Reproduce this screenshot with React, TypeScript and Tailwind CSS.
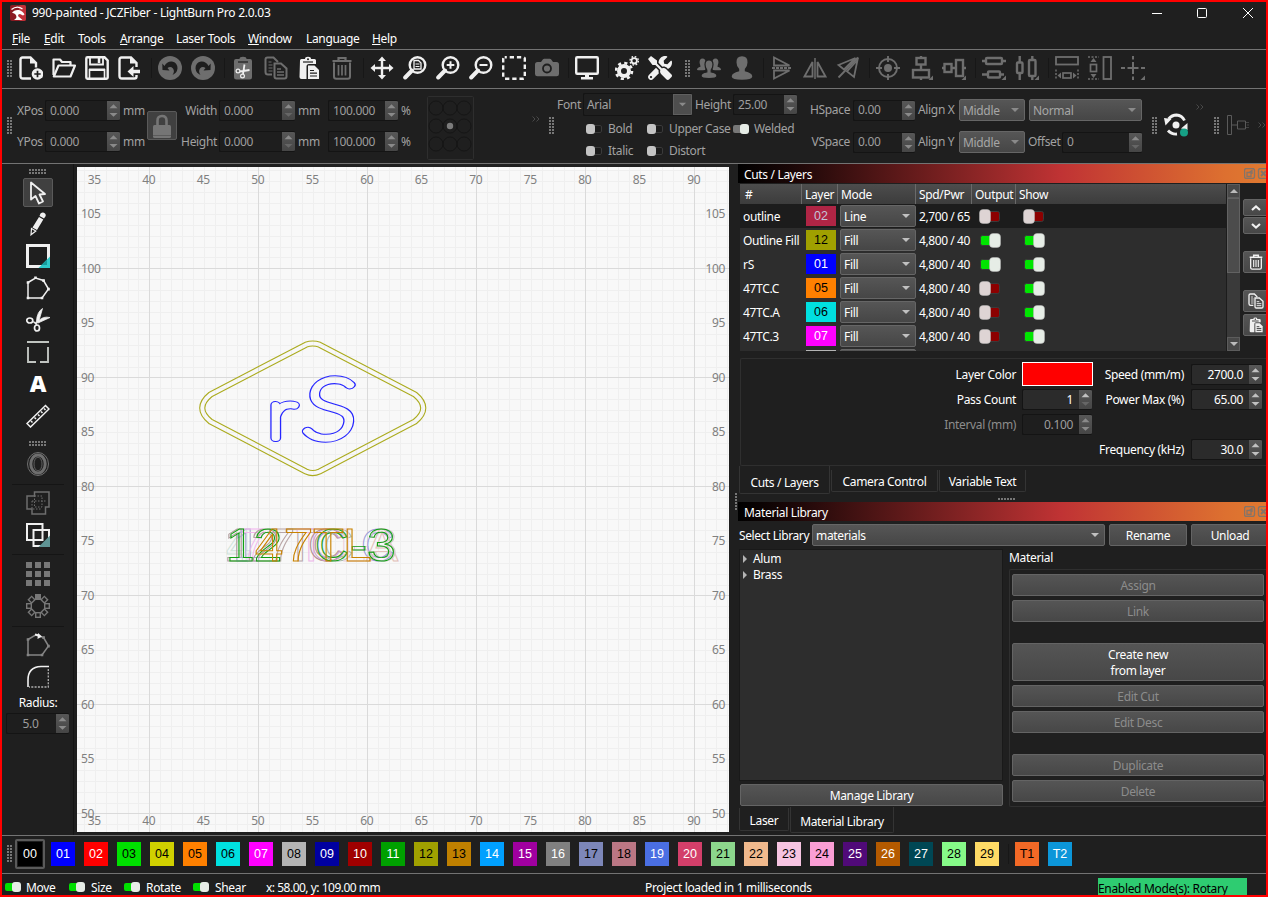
import React from "react";
import { FaTools } from "react-icons/fa";

type P = { className?: string; children?: React.ReactNode };

const W = "#f0f0f0";
const G = "#6e6e6e";

function Svg({ children, className = "" }: P) {
  return (
    <svg viewBox="0 0 24 24" className={"h-6 w-6 shrink-0 " + className} fill="none">
      {children}
    </svg>
  );
}

function HandleV({ className = "" }: P) {
  return (
    <svg viewBox="0 0 5 18" className={"h-[18px] w-[5px] shrink-0 " + className} fill="#777">
      {[0, 3, 6, 9, 12, 15].map((y) => (
        <g key={y}>
          <rect x="0" y={y} width="2" height="2" />
          <rect x="3" y={y} width="2" height="2" />
        </g>
      ))}
    </svg>
  );
}

function HandleH({ className = "", rows = 2 }: P & { rows?: number }) {
  return (
    <svg viewBox="0 0 18 5" className={"h-[5px] w-[18px] shrink-0 " + className} fill="#777">
      {[0, 3, 6, 9, 12, 15].map((x) => (
        <g key={x}>
          <rect x={x} y="0" width="2" height="2" />
          {rows > 1 && <rect x={x} y="3" width="2" height="2" />}
        </g>
      ))}
    </svg>
  );
}

function Spin({ v, className = "", align = "left", on = false, up = true, down = true }: P & { v: string; align?: string; on?: boolean; up?: boolean; down?: boolean }) {
  const hi = on ? "#c0c0c0" : "#8a8a8a";
  return (
    <div className={"flex shrink-0 overflow-hidden rounded-[2px] border border-r-0 border-[#141414] " + (on ? "bg-[#2b2b2b] text-white " : "bg-[#1e1e1e] text-[#9d9d9d] ") + className}>
      <span className={"flex flex-1 items-center " + (align === "right" ? "justify-end pr-[6px]" : align === "center" ? "justify-center pr-[2px]" : "pl-[4px]")}>{v}</span>
      <svg viewBox="0 0 13 20" preserveAspectRatio="none" className="h-full w-[13px] shrink-0 bg-linear-to-b from-[#575757] to-[#464646]">
        <path d="M2.5 7.5L6.5 3.5L10.5 7.5Z" fill={up ? hi : "#666"} />
        <path d="M2.5 12.5L6.5 16.5L10.5 12.5Z" fill={down ? hi : "#666"} />
      </svg>
    </div>
  );
}

function Select({ v, className = "", on = false }: P & { v: string; on?: boolean }) {
  return (
    <div className={"flex shrink-0 items-center justify-between rounded-[2px] border border-[#666] bg-linear-to-b from-[#565656] to-[#464646] pr-[5px] pl-[3px] " + (on ? "text-white " : "text-[#a6a6a6] ") + className}>
      <span className="pt-px">{v}</span>
      <svg viewBox="0 0 8 4" className="h-1 w-2">
        <path d="M0 0H8L4 4Z" fill={on ? "#c0c0c0" : "#8a8a8a"} />
      </svg>
    </div>
  );
}

function Btn({ children, className = "" }: P) {
  return (
    <div className={"flex shrink-0 items-center justify-center rounded-[2px] border border-[#646464] bg-linear-to-b from-[#555] to-[#474747] text-center " + className}>{children}</div>
  );
}

function SmallToggle({ kind }: { kind: "off" | "grayon" | "green" }) {
  return (
    <svg viewBox="0 0 16 11" className="h-[11px] w-4 shrink-0">
      {kind === "off" && <rect x="6.5" y="1.5" width="9" height="7" rx="1.5" fill="#1b1b1b" stroke="#3a3a3a" />}
      {kind === "grayon" && <rect x="0" y="1" width="10" height="8" rx="2" fill="#777" />}
      {kind === "green" && <rect x="0" y="1" width="10" height="8" rx="2" fill="#00e000" />}
      <rect x={kind === "off" ? 0 : 7} y="0" width="9" height="10" rx="3" fill={kind === "off" ? "#c4c4c4" : "#e6ece6"} />
    </svg>
  );
}

function Toggle({ on }: { on: boolean }) {
  return (
    <svg viewBox="0 0 22 15" className="h-[15px] w-[22px] shrink-0">
      <rect x={on ? 1.5 : 8.5} y="2.5" width="12" height="10" rx="2" fill={on ? "#00e600" : "#8c0000"} stroke="#3a3a3a" />
      <rect x={on ? 10.5 : 0.5} y="0.5" width="11" height="14" rx="3.5" fill={on ? "#e6ede6" : "#ded4d4"} stroke="#bbb" strokeWidth=".5" />
    </svg>
  );
}

const More = ({ className = "" }: P) => (
  <svg viewBox="0 0 8 6" className={"h-[6px] w-2 shrink-0 " + className} fill="none" stroke="#484848" strokeWidth="1">
    <path d="M.5 .5L3 3L.5 5.5M4.5 .5L7 3L4.5 5.5" />
  </svg>
);

const Sep = () => <div className="h-5 w-[7px] shrink-0 border-l border-[#171717]" />;

const Clip = ({ c }: { c: string }) => (
  <>
    <path d="M3 4.5Q3 3 4.5 3H8Q8 .8 11 .8T14 3h3.5Q19 3 19 4.5V8h-7Q9.500 8 9.500 10.500V23H4.500Q2.500 23 2.500 21Z" fill={c} />
    <path d="M6 6h10" stroke="#1e1e1e" strokeWidth="1.2" />
    <circle cx="11" cy="3.200" r="1" fill="#1e1e1e" />
    <path d="M11 9.500h6.500L22 14v9H11Z" fill={c} />
    <path d="M13 14.500h4M13 17.200h7M13 20h7" stroke="#1e1e1e" strokeWidth="1.200" />
  </>
);
const CopyG = ({ c }: { c: string }) => (
  <>
    <path d="M8 18.500H4Q1.500 18.500 1.500 16V3.500Q1.500 1.500 3.500 1.500H9.500L14 6" stroke={c} strokeWidth="2" />
    <path d="M4.500 6h3M4.500 9h4M4.500 12h4M4.500 15h4" stroke={c} strokeWidth="1.200" />
    <path d="M10.500 7.500H17L22.500 12.500V20.500Q22.500 22.500 20.500 22.500H12.500Q10.500 22.500 10.500 20.500Z" stroke={c} strokeWidth="2" />
    <path d="M13 13h4M13 16h7M13 19h7" stroke={c} strokeWidth="1.400" />
  </>
);
const TrashG = ({ c }: { c: string }) => (
  <>
    <path d="M2.500 5h19M8.500 4.500V2h7v2.500" stroke={c} strokeWidth="2.200" />
    <path d="M4 6.500V20.500Q4 22.700 6.200 22.700H17.800Q20 22.700 20 20.500V6.500" stroke={c} strokeWidth="2" />
    <path d="M8.500 9v10.500M12 9v10.500M15.500 9v10.500" stroke={c} strokeWidth="1.700" />
  </>
);
const Lens = ({ children }: P) => (
  <Svg>
    <circle cx="14.500" cy="9" r="7.800" stroke={W} strokeWidth="2.400" />
    <path d="M9 14.500L2.200 21.500" stroke={W} strokeWidth="4" strokeLinecap="round" />
    {children}
  </Svg>
);
const Undo = ({ className = "" }: P) => (
  <Svg className={className}>
    <circle cx="12" cy="12" r="12" fill={G} />
    <path d="M6.500 10Q9 5 14 5.500Q19.500 6.500 19.500 12.500Q19 17 14.500 19Q17 15.500 15 12.500Q12.500 10 9.500 12L11.500 14.500L4.500 14L4.300 7.500Z" fill="#1e1e1e" />
  </Svg>
);

function MainToolbar() {
  const tri = <path d="M24 19.500V24H19.500Z" fill={G} />;
  return (
    <div className="flex h-[39px] shrink-0 items-center border-b border-[#737373] pb-[2px] pl-[7px]">
      <HandleV className="mt-px" />
      <div className="ml-[7px] flex items-center gap-[9px]">
        <Svg>
          <path d="M12 22.500H4Q1.500 22.500 1.500 20V3.500Q1.500 1.500 3.500 1.500H11.500L17 7V11.500" stroke={W} strokeWidth="2.400" />
          <path d="M11 1v6.500h6.500" fill={W} />
          <circle cx="18.500" cy="18" r="5.800" fill={W} />
          <path d="M18.500 14.800v6.400M15.300 18h6.400" stroke="#1e1e1e" strokeWidth="1.700" />
        </Svg>
        <Svg>
          <path d="M1.500 19V3.500H8L10 6H18.500V9" stroke={W} strokeWidth="2.200" strokeLinejoin="round" />
          <path d="M1.800 20.500L6.500 9.500H23L18.500 20.500Z" stroke={W} strokeWidth="2.200" strokeLinejoin="round" />
        </Svg>
        <Svg>
          <path d="M1.300 2.500Q1.300 1.300 2.500 1.300H19.500L22.700 4.500V21.500Q22.700 22.700 21.500 22.700H2.500Q1.300 22.700 1.300 21.500Z" stroke={W} strokeWidth="2.400" />
          <path d="M5 1.500V8.500H18V1.500" stroke={W} strokeWidth="1.800" />
          <path d="M14 2v5" stroke={W} strokeWidth="2.500" />
          <path d="M4 12.500H20V15H4Z" fill={W} />
          <path d="M4.500 13V22.500M19.500 13V22.500" stroke={W} strokeWidth="1.600" />
        </Svg>
        <Svg>
          <path d="M18.500 19V20.500Q18.500 22.500 16.500 22.500H4Q1.500 22.500 1.500 20V3.500Q1.500 1.500 3.500 1.500H13L18.500 7V11" stroke={W} strokeWidth="2.400" />
          <path d="M12 1v6.500h6.500" fill={W} />
          <path d="M9.500 15.500L15.500 10V13.700H22V17.300H15.500V21Z" fill={W} />
        </Svg>
      </div>
      <div className="w-[9px]" /><Sep />
      <div className="flex gap-[9px]">
        <Undo /><Undo className="-scale-x-100" />
      </div>
      <div className="w-[9px]" /><Sep />
      <div className="flex gap-[9px]">
        <Svg>
          <path d="M3 5Q3 3 5 3H8.500Q8.500 .8 12 .8T15.500 3H19Q21 3 21 5V21Q21 23.500 18.500 23.500H5.500Q3 23.500 3 21Z" fill={G} />
          <path d="M7 6h10" stroke="#1e1e1e" strokeWidth="1.200" />
          <circle cx="7" cy="15" r="1.900" stroke={W} strokeWidth="1.200" />
          <circle cx="11.500" cy="20" r="1.900" stroke={W} strokeWidth="1.200" />
          <path d="M9 15.500L18.500 14M12 18L13.500 8.500" stroke={W} strokeWidth="1.800" />
        </Svg>
        <Svg><CopyG c={G} /></Svg>
        <Svg><Clip c={W} /></Svg>
        <Svg><TrashG c={G} /></Svg>
      </div>
      <div className="w-[9px]" /><Sep />
      <div className="flex gap-[9px]">
        <Svg>
          <path d="M12 3v18M3 12h18" stroke={W} strokeWidth="2.400" />
          <path d="M12 .5L16 5H8ZM12 23.500L16 19H8ZM.5 12L5 8V16ZM23.500 12L19 8V16Z" fill={W} />
        </Svg>
        <Lens><path d="M11 4.500H15.500L18 7V13H11Z" stroke={W} strokeWidth="1.300" /><path d="M12.500 8h4M12.500 10.500h4" stroke={W} /></Lens>
        <Lens><path d="M14.500 5.200v7.600M10.700 9h7.600" stroke={W} strokeWidth="2" /></Lens>
        <Lens><path d="M10.500 9h8" stroke={W} strokeWidth="2" /></Lens>
        <Svg><rect x="1.200" y="1.200" width="21.600" height="21.600" rx="1.500" stroke={W} strokeWidth="2.400" strokeDasharray="4.300 2.900" strokeDashoffset="2.200" /></Svg>
        <Svg>
          <path d="M0 8.500Q0 6 2.500 6H6L8 3.300Q8.500 2.800 9.200 2.800H14.800Q15.500 2.800 16 3.300L18 6H21.500Q24 6 24 8.500V18Q24 20.300 21.500 20.300H2.500Q0 20.300 0 18Z" fill={G} />
          <circle cx="12" cy="12.500" r="4" stroke="#1e1e1e" strokeWidth="1.800" />
        </Svg>
      </div>
      <div className="w-[9px]" /><Sep />
      <Svg>
        <rect x="1.200" y="1.200" width="21.600" height="16.600" rx="1" stroke={W} strokeWidth="2.400" />
        <path d="M10 18h4v3h4v2.500H6V21h4Z" fill={W} />
      </Svg>
      <div className="w-[9px]" /><Sep />
      <div className="flex gap-[9px]">
        <Svg>
          <circle cx="9" cy="15" r="5" stroke={W} strokeWidth="4" />
          <circle cx="9" cy="15" r="8" stroke={W} strokeWidth="2.600" strokeDasharray="3.140 3.143" />
          <circle cx="19.200" cy="4.800" r="2.700" stroke={W} strokeWidth="1.800" />
          <circle cx="19.200" cy="4.800" r="4.200" stroke={W} strokeWidth="1.400" strokeDasharray="1.650 1.650" />
        </Svg>
        <FaTools className="h-6 w-6" color={W} />
      </div>
      <HandleV className="mt-px ml-[13px]" />
      <div className="ml-[7px] flex gap-[9px]">
        <Svg>
          <path d="M5.500 2.500Q8.500 2.500 8.500 6Q8 9 9.500 11L8 14Q3 14.500 0 14Q0 11.500 3.500 10.800Q3.500 9.500 2.600 7Q2.300 2.500 5.500 2.500ZM18.500 2.500Q15.500 2.500 15.500 6Q16 9 14.500 11L16 14Q21 14.500 24 14Q24 11.500 20.500 10.800Q20.500 9.500 21.400 7Q21.700 2.500 18.500 2.500Z" fill={G} />
          <path d="M12 4Q16 4 16 8.500Q16 11.500 14.200 14V16Q20 17 20 20Q20 22.500 12 22.500T4 20Q4 17 9.800 16V14Q8 11.500 8 8.500Q8 4 12 4Z" fill={G} stroke="#1f1f1f" strokeWidth="1.200" />
        </Svg>
        <Svg>
          <path d="M12 .3Q17.800 .3 17.500 6.500Q17.500 10.500 14.800 13V15.300Q22.300 17 22.300 20.500Q22 23.700 12 23.700T1.700 20.500Q1.700 17 9.200 15.300V13Q6.500 10.500 6.500 6.500Q6.200 .3 12 .3Z" fill={G} />
        </Svg>
      </div>
      <div className="w-[9px]" /><Sep />
      <div className="flex gap-[9px]">
        <Svg>
          <path d="M4 1.500V9.500H19.500ZM4 22.500V14.500H19.500Z" stroke={G} strokeWidth="1.800" />
          <path d="M2 12H22" stroke={G} strokeWidth="1.800" strokeDasharray="3 1" />
        </Svg>
        <Svg>
          <path d="M1.500 20.500H9.500V6ZM22.500 20.500H14.500V6Z" stroke={G} strokeWidth="1.800" />
          <path d="M12 2V23" stroke={G} strokeWidth="1.500" />
        </Svg>
        <Svg>
          <path d="M2.500 9L19.500 2L8 13.500ZM21.500 4L11 15.500L18 21Z" stroke={G} strokeWidth="1.800" />
          <path d="M22 1.500L2.500 21.500" stroke={G} strokeWidth="1.800" />
        </Svg>
      </div>
      <div className="w-[9px]" /><Sep />
      <div className="flex gap-[9px]">
        <Svg>
          <circle cx="12" cy="12" r="9" stroke={G} strokeWidth="1.900" />
          <circle cx="12" cy="12" r="4" fill={G} />
          <path d="M12 0v6M12 18v6M0 12h6M18 12h6" stroke={G} strokeWidth="1.900" />
        </Svg>
        <Svg>
          <rect x="7.500" y="2" width="9" height="6.500" stroke={G} strokeWidth="2.400" />
          <rect x="4" y="14" width="16" height="7.500" stroke={G} strokeWidth="2.400" />
          <path d="M12 0v2M12 8v6M12 21v3" stroke={G} strokeWidth="2.400" />{tri}
        </Svg>
        <Svg>
          <rect x="2.500" y="8" width="7" height="8" stroke={G} strokeWidth="2.400" />
          <rect x="14" y="4" width="7" height="16" stroke={G} strokeWidth="2.400" />
          <path d="M0 12h2M9 12h5M21 12h3" stroke={G} strokeWidth="2.400" />{tri}
        </Svg>
      </div>
      <div className="w-[9px]" /><Sep />
      <div className="flex gap-[9px]">
        <Svg>
          <rect x="4" y="2" width="16" height="6" rx="1" stroke={G} strokeWidth="2.400" />
          <rect x="6" y="15.500" width="12" height="6" rx="1" stroke={G} strokeWidth="2.400" />
          <path d="M0 5h4M20 5h4M0 18.500h6M18 18.500h4" stroke={G} strokeWidth="2.400" />{tri}
        </Svg>
        <Svg>
          <rect x="2" y="6.500" width="5.500" height="10.500" rx="1" stroke={G} strokeWidth="2.400" />
          <rect x="14" y="4" width="6.500" height="16" rx="1" stroke={G} strokeWidth="2.400" />
          <path d="M4.700 0v6M4.700 18v6M17.300 0v4M17.300 20v4" stroke={G} strokeWidth="2.400" />{tri}
        </Svg>
      </div>
      <div className="w-[9px]" /><Sep />
      <div className="flex gap-[9px]">
        <Svg>
          <rect x="1" y="1" width="22" height="7.500" stroke={G} strokeWidth="1.800" />
          <rect x="8" y="17" width="8" height="5" stroke={G} strokeWidth="1.700" />
          <path d="M1 13.500V24M23 13.500V24" stroke={G} strokeWidth="1.500" strokeDasharray="2 1.500" />
          <path d="M2.500 19.500L6 16.500V22.500ZM21.500 19.500L18 16.500V22.500Z" fill={G} />
        </Svg>
        <Svg>
          <rect x="15.500" y="1" width="7.500" height="22" stroke={G} strokeWidth="1.800" />
          <rect x="2.500" y="8.500" width="6" height="7" stroke={G} strokeWidth="1.700" />
          <path d="M0 1H11M0 23H11" stroke={G} strokeWidth="1.500" strokeDasharray="2 1.500" />
          <path d="M5.500 2L8.500 6H2.500ZM5.500 22L8.500 18H2.500Z" fill={G} />
        </Svg>
        <Svg>
          <path d="M12 0v3.500M12 6v3.500M12 14.500V18M12 20.500V24M0 12h4M6.500 12h11M12 8.500v7M20 12h4" stroke={G} strokeWidth="2" />{tri}
        </Svg>
      </div>
    </div>
  );
}

function PropertyBar() {
  const mm = "ml-[3px] w-[23px]";
  return (
    <div className="flex h-[75px] shrink-0 border-b border-[#737373] pl-[7px] text-[#a2a2a2]">
      <HandleV className="mt-7" />
      <div className="ml-[5px] flex flex-col gap-[10px] pt-[11px]">
        {["XPos", "YPos"].map((l) => (
          <div key={l} className="flex h-[21px] items-center">
            <span className="w-7">{l}</span>
            <Spin v="0.000" className="h-[21px] w-[75px]" />
            <span className={mm}>mm</span>
          </div>
        ))}
      </div>
      <div className="mt-[22px] ml-px flex h-[29px] w-[30px] items-center justify-center rounded-[2px] border border-[#5a5a5a] bg-[#404040]">
        <Svg>
          <path d="M7.500 11V6.500Q7.500 2 12 2T16.500 6.500V11" stroke="#757575" strokeWidth="2.600" />
          <rect x="3" y="11" width="18" height="13" rx="1.500" fill="#757575" />
          <path d="M3 21.500H21" stroke="#555" strokeWidth=".8" />
        </Svg>
      </div>
      <div className="flex flex-col gap-[10px] pt-[11px]">
        {["Width", "Height"].map((l) => (
          <div key={l} className="flex h-[21px] items-center">
            <span className="mr-[2px] w-10 text-right">{l}</span>
            <Spin v="0.000" className="h-[21px] w-[76px]" down={false} />
            <span className="ml-[3px] w-[30px]">mm</span>
            <Spin v="100.000" className="h-[21px] w-[70px]" />
            <span className="ml-[3px] w-3">%</span>
          </div>
        ))}
      </div>
      <svg viewBox="0 0 47 64" className="mt-[7px] ml-[14px] h-16 w-[47px] shrink-0" fill="none" stroke="#151515">
        <rect x=".5" y=".5" width="46" height="63" rx="1" stroke="#2e2e2e" />
        {[12, 30, 48].map((y) => [9, 23, 37].map((x) => <circle key={x + "-" + y} cx={x} cy={y} r="7" />))}
        <circle cx="23" cy="30" r="3.200" fill="#7c7c7c" stroke="none" />
      </svg>
      <More className="mt-[27px] ml-[58px]" />
      <HandleV className="mt-7 ml-[9px]" />
      <div className="ml-[3px] w-[241px] pt-[4px]">
        <div className="flex h-[23px] items-center">
          <span className="w-[26px]">Font</span>
          <div className="flex h-[23px] w-[109px] items-center justify-between overflow-hidden rounded-[2px] border border-r-0 border-[#141414] pl-[3px]">
            Arial
            <svg viewBox="0 0 19 21" className="h-[21px] w-[19px] border border-[#5f5f5f] bg-[#4e4e4e]"><path d="M5.500 8.500h8l-4 4Z" fill="#8a8a8a" /></svg>
          </div>
          <span className="mr-[2px] ml-[3px] w-9">Height</span>
          <Spin v="25.00" className="h-[21px] w-16" />
        </div>
        <div className="mt-[5px] flex h-4 items-center pl-[29px]">
          <div className="flex w-[61px] items-center gap-[6px]"><SmallToggle kind="off" />Bold</div>
          <div className="flex w-[86px] items-center gap-[6px] whitespace-nowrap tracking-[-0.38px]"><SmallToggle kind="off" />Upper Case</div>
          <div className="flex items-center gap-[5px]"><SmallToggle kind="grayon" />Welded</div>
        </div>
        <div className="mt-[6px] flex h-4 items-center pl-[29px]">
          <div className="flex w-[61px] items-center gap-[6px]"><SmallToggle kind="off" />Italic</div>
          <div className="flex items-center gap-[6px]"><SmallToggle kind="off" />Distort</div>
        </div>
      </div>
      <div className="ml-3 flex flex-col gap-[10px] pt-[10px]">
        <div className="flex h-[22px] items-center">
          <span className="mr-[3px] w-10 text-right">HSpace</span>
          <Spin v="0.00" className="h-[21px] w-[62px]" />
          <span className="ml-[3px] w-[41px]">Align X</span>
          <Select v="Middle" className="h-[22px] w-[66px]" />
          <Select v="Normal" className="ml-1 h-[22px] w-[113px]" />
        </div>
        <div className="flex h-[22px] items-center">
          <span className="mr-[3px] w-10 text-right">VSpace</span>
          <Spin v="0.00" className="h-[21px] w-[62px]" />
          <span className="ml-[3px] w-[41px]">Align Y</span>
          <Select v="Middle" className="h-[22px] w-[66px]" />
          <span className="ml-[3px] w-[34px]">Offset</span>
          <Spin v="0" className="h-[21px] w-20" down={false} />
        </div>
      </div>
      <HandleV className="mt-7 ml-[10px]" />
      <Svg className="mt-[24px] ml-[7px]">
        <path d="M4.500 6Q8 2 12.500 2Q18 2.300 20.500 7.500M4 17.500Q7.500 21.500 13 21" stroke={W} strokeWidth="2.800" />
        <path d="M0 5L7.500 6L1.500 12.500ZM23.500 10L17 15.500L23.500 17Z" fill={W} />
        <circle cx="12" cy="12" r="3.500" fill={W} />
        <circle cx="20" cy="19.500" r="4" fill="#16a085" />
      </Svg>
      <More className="mt-[15px] ml-2" />
      <HandleV className="mt-7 ml-[10px]" />
      <svg viewBox="0 0 23 22" className="mt-[25px] ml-2 h-[22px] w-[23px] shrink-0" fill="none" stroke="#5a5a5a">
        <path d="M.5 1.500h4v19h-4ZM5 11h5M10.500 7h8v8h-8Z" /><path d="M19 8.500h3M20 11h2M19 13.500h3" stroke="#444" />
      </svg>
      <More className="mt-[33px] ml-2" />
    </div>
  );
}

function LeftSep({ className = "" }: P) {
  return <div className={"h-px w-[52px] shrink-0 bg-[#151515] " + className} />;
}

function ToolColumn() {
  return (
    <div className="flex w-[72px] shrink-0 flex-col items-center border-r border-[#151515] pl-px">
      <HandleH className="mt-[5px]" />
      <div className="mt-1 flex h-[29px] w-[30px] shrink-0 items-center justify-center rounded-[2px] border border-[#5a5a5a] bg-[#404040]">
        <Svg><path d="M5 1.500V18.500L9.500 15L13 22.500L17 20.500L13.500 13.500L19 13Z" stroke={W} strokeWidth="1.800" strokeLinejoin="round" /></Svg>
      </div>
      <div className="mt-[5px] flex flex-col gap-2">
        <Svg>
          <path d="M14.500 1.500Q17 -.5 19 1.500Q20.500 3 19 5L18 6.500L13.500 4Z M13 5L17.300 7.500L11 18L6.500 15.500Z" fill={W} />
          <path d="M5.500 16.500L9.800 19L5 22.800Z" stroke={W} strokeWidth="1.200" />
        </Svg>
        <Svg>
          <rect x="1.500" y="1.500" width="21" height="21" stroke={W} strokeWidth="3" />
          <path d="M24 12.500V24H12.500Z" fill="#2ec8c8" /><path d="M21 15.500V21H15.500Z" fill="#159a9a" />
        </Svg>
        <Svg>
          <path d="M2 6.500L9.500 2L17.500 4.500L22.500 13L16 22H2Z" stroke={W} strokeWidth="1.500" />
          <path d="M.7 5.200h2.600v2.600H.7ZM8.200 .5h2.600v2.600H8.200ZM16.300 3.300h2.600v2.600h-2.600ZM21.200 11.800h2.600v2.600h-2.600ZM14.700 20.700h2.600v2.600h-2.600ZM.7 20.700h2.600v2.600H.7Z" fill={W} />
        </Svg>
        <Svg>
          <ellipse cx="3.800" cy="12.500" rx="3" ry="2.500" stroke={W} strokeWidth="1.700" />
          <ellipse cx="11" cy="20" rx="2.500" ry="3" stroke={W} strokeWidth="1.700" />
          <path d="M6.500 13.500L12 15L24 9.500Q17 8 13 12.500L16.500 .5Q11 4 10.500 13L10.500 17.500" fill={W} stroke={W} strokeWidth=".8" />
        </Svg>
        <Svg><path d="M1 2H23M10 22H2V7M14 22H22V7" stroke="#c0c4c0" strokeWidth="1.900" /></Svg>
        <div className="flex h-6 w-6 items-center justify-center pb-px font-['Open_Sans'] text-[23px] leading-none font-extrabold text-white">A</div>
        <Svg>
          <path d="M1 19.500L19.500 1.500L23 5L4.500 23Z" stroke={W} strokeWidth="1.500" />
          <path d="M5 17l1.500 1.500M8.500 13.500l1.500 1.500M12 10.500l1.500 1.500M15 7.500l1.500 1.500M18 4.500l1.500 1.500" stroke={W} strokeWidth="1.500" />
        </Svg>
      </div>
      <HandleH className="mt-[13px]" />
      <div className="mt-[6px] flex h-6 w-6 shrink-0 items-center justify-center">
        <svg viewBox="0 0 24 24" className="h-6 w-6" fill="none" stroke={G}>
          <ellipse cx="12" cy="12" rx="10.500" ry="11.500" strokeWidth="1" />
          <ellipse cx="12" cy="12" rx="7.200" ry="9" strokeWidth="3" />
          <ellipse cx="12" cy="12" rx="4" ry="6.800" strokeWidth=".8" />
        </svg>
      </div>
      <LeftSep className="mt-2" />
      <Svg className="mt-[6px]">
        <path d="M1 5H8.500V1H23V16H19.500V23H6V18H1Z" stroke={G} strokeWidth="1.500" />
        <path d="M8.500 5H16V16H8.500ZM6 10H19.500M6 10V18H16" stroke={G} strokeWidth="1" strokeDasharray="1.500 1.500" />
      </Svg>
      <Svg className="mt-2">
        <path d="M1 1H16.500V17H1ZM7.500 7H23V23H7.500Z" stroke={W} strokeWidth="2" />
        <path d="M24 12.500V24H12.500Z" fill="#5f9494" />
      </Svg>
      <LeftSep className="mt-[7px]" />
      <Svg className="mt-[7px]">
        {[0, 9, 18].map((y) => [0, 9, 18].map((x) => <rect key={x + "-" + y} x={x} y={y} width="6" height="6" fill="#777" />))}
      </Svg>
      <Svg className="mt-2">
        {[45, 90, 135, 180, 225, 270, 315].map((a) => <rect key={a} x="9.700" y=".7" width="4.600" height="4.600" stroke="#777" strokeWidth="1.400" transform={`rotate(${a} 12 12)`} />)}
        <rect x="9" y="0" width="6" height="6" fill="#777" />
      </Svg>
      <LeftSep className="mt-2" />
      <Svg className="mt-[6px]">
        <path d="M2 6.500L9.500 2L17.500 4.500L22.500 13L16 22H2Z" stroke="#858585" strokeWidth="1.500" />
        <path d="M.7 5.200h2.600v2.600H.7ZM16.300 3.300h2.600v2.600h-2.600ZM21.200 11.800h2.600v2.600h-2.600ZM14.700 20.700h2.600v2.600h-2.600ZM.7 20.700h2.600v2.600H.7Z" fill="#858585" />
        <path d="M9 1.500L13 2.500" stroke={W} strokeWidth="2" /><path d="M12 0L16 3.500L11.500 6Z" fill={W} />
      </Svg>
      <Svg className="mt-2">
        <path d="M2 22V15Q2 2 15 1.500H23" stroke={W} strokeWidth="1.600" />
        <path d="M22.300 4V22H3" stroke="#b0b0b0" strokeWidth="1.300" strokeDasharray="2 1.300" />
      </Svg>
      <div className="mt-[6px] h-4 leading-4">Radius:</div>
      <Spin v="5.0" align="center" className="mt-[2px] -ml-px h-[21px] w-[63px]" />
    </div>
  );
}

const MX = [35, 40, 45, 50, 55, 60, 65, 70, 75, 80, 85, 90];
const MY = [105, 100, 95, 90, 85, 80, 75, 70, 65, 60, 55, 50];
const px = (m: number) => 149.3 - 77 + (m - 40) * 10.9;
const py = (m: number) => 268.4 - 167 + (100 - m) * 10.9;

const LETTERS: [string, number, string, number][] = [
  ["4", 149, "#cfe2d9", 1.02],
  ["1", 147, "#b09c9c", 1.1],
  ["1", 156, "#a9a9d0", 1.1],
  ["7", 163, "#f2b8ee", 1.0],
  ["2", 174, "#b09c9c", 1.1],
  ["7", 190, "#b9a5a5", 1.1],
  ["T", 208, "#b8a8ac", 1.08],
  ["T", 219, "#edb8ea", 1.08],
  ["C", 231, "#b08e8c", 1.08],
  ["C", 234, "#cf9fcc", 1.02],
  ["C", 243, "#a9b8a6", 1.0],
  ["L", 263, "#ecd0da", 1.0],
  ["-", 275, "#e4c8e2", 1.2],
  ["C", 284, "#9a9ad8", 1.0],
  ["A", 289, "#e2c0b8", 1.05],
  ["3", 292, "#d0c8cc", 1.1],
  ["1", 149, "#12a012", 1.12],
  ["2", 177, "#12a012", 1.1],
  ["C", 238, "#12a012", 1.02],
  ["-", 273, "#12a012", 1.12],
  ["3", 290, "#12a012", 1.12],
  ["4", 178, "#c88200", 1.1],
  ["7", 207, "#c88200", 1.14],
  ["T", 236, "#c88200", 1.1],
  ["L", 266, "#c88200", 1.12],
];

function Monogram() {
  return (
    <>
      <text transform="translate(190.5 271) scale(1.22 1)" fontSize="69">r</text>
      <text transform="translate(223.500 270.500) skewX(-6) scale(1.22 1)" fontSize="83">S</text>
    </>
  );
}

function Canvas() {
  const minor: number[] = [];
  for (let i = 34; i <= 94; i++) minor.push(i);
  const minorY: number[] = [];
  for (let i = 49; i <= 109; i++) minorY.push(i);
  const dia = (w: number) => <path d="M229 177.700Q235.700 175.300 242.500 177.700L338 227.500Q354.500 241 338 254.500L242.500 304.500Q235.700 307.700 229 304.500L133.500 254.500Q117 241 133.500 227.500Z" strokeWidth={w} strokeLinejoin="round" />;
  return (
    <svg viewBox="0 0 652 665" className="mt-[3px] ml-[3px] h-[665px] w-[652px] shrink-0 bg-[#f8f8f8]" fontFamily="Noto Sans" fontSize="12" letterSpacing="-.4">
      <defs>
        <mask id="inner" maskUnits="userSpaceOnUse" x="0" y="0" width="652" height="665">
          <rect width="652" height="665" fill="#fff" />
          <g fill="none" stroke="#000">{dia(4)}</g>
        </mask>
        <mask id="core" maskUnits="userSpaceOnUse" x="0" y="0" width="652" height="665">
          <rect width="652" height="665" fill="#fff" />
          <g fontFamily="Lato" fontWeight="100" fill="#000" stroke="#000" strokeWidth="6" strokeLinejoin="round" strokeLinecap="round">
            <Monogram />
          </g>
        </mask>
      </defs>
      <g stroke="#efefef">
        {minor.map((m) => <path key={m} d={`M${Math.round(px(m)) + 0.5} 0V665`} />)}
        {minorY.map((m) => <path key={m} d={`M0 ${Math.round(py(m)) + 0.5}H652`} />)}
      </g>
      <g stroke="#dadada">
        {[40, 50, 60, 70, 80, 90].map((m) => <path key={m} d={`M${Math.floor(px(m)) + 0.5} 0V665`} />)}
        {[100, 90, 80, 70, 60, 50].map((m) => <path key={m} d={`M0 ${Math.floor(py(m)) + 0.5}H652`} />)}
      </g>
      <g fill="#808080" textAnchor="middle">
        {MX.map((m) => (
          <React.Fragment key={m}>
            <text x={px(m) - 0.5} y="17">{m}</text>
            <text x={px(m) - 0.5} y="658">{m}</text>
          </React.Fragment>
        ))}
      </g>
      <g fill="#808080">
        {MY.map((m) => (
          <React.Fragment key={m}>
            <text x="4" y={py(m) + 4.500}>{m}</text>
            <text x="648" y={py(m) + 4.500} textAnchor="end">{m}</text>
          </React.Fragment>
        ))}
      </g>
      <g fill="none" stroke="#abab1e" mask="url(#inner)">{dia(6.200)}</g>
      <g mask="url(#core)" fontFamily="Lato" fontWeight="100" fill="#2626ff" stroke="#2626ff" strokeWidth="8.100" strokeLinejoin="round" strokeLinecap="round" letterSpacing="0">
        <Monogram />
      </g>
      <g fontFamily="Liberation Sans" fontSize="46" fill="none" strokeWidth="1" letterSpacing="0">
        {LETTERS.map(([ch, x, c, s], i) => (
          <text key={i} transform={`translate(${x} 394) scale(${s} 1)`} stroke={c}>{ch}</text>
        ))}
      </g>
    </svg>
  );
}

function DockTitle({ t, className = "" }: P & { t: string }) {
  return (
    <div className={"flex h-[19px] shrink-0 items-center justify-between bg-[linear-gradient(90deg,#000_0%,#1a0707_10%,#c03334_61%,#dd7030_92%,#e07a30_100%)] pl-[6px] " + className}>
      <span className="pt-[2px]">{t}</span>
      <svg viewBox="0 0 24 11" className="h-[11px] w-6" fill="none" stroke="#857468">
        <rect x=".5" y=".5" width="10" height="10" rx="2" strokeWidth="1.400" /><path d="M3 8.500V4.500h4v4ZM5 4.500L8 2.500V6" strokeWidth="1.300" />
        <rect x="14.500" y=".5" width="10" height="10" rx="2" strokeWidth="1.400" /><path d="M17 3L22 8M22 3L17 8" strokeWidth="2" />
      </svg>
    </div>
  );
}

const ROWS = [
  { n: "outline", id: "02", bg: "bg-[#b02545]", fg: "text-[#c4c4d8]", m: "Line", s: "2,700 / 65", o: false, v: false },
  { n: "Outline Fill", id: "12", bg: "bg-[#a0a000]", fg: "text-black", m: "Fill", s: "4,800 / 40", o: true, v: true },
  { n: "rS", id: "01", bg: "bg-[#0000ff]", fg: "text-white", m: "Fill", s: "4,800 / 40", o: true, v: true },
  { n: "47TC.C", id: "05", bg: "bg-[#ff8000]", fg: "text-black", m: "Fill", s: "4,800 / 40", o: false, v: true },
  { n: "47TC.A", id: "06", bg: "bg-[#00e0e0]", fg: "text-black", m: "Fill", s: "4,800 / 40", o: false, v: true },
  { n: "47TC.3", id: "07", bg: "bg-[#ff00ff]", fg: "text-white", m: "Fill", s: "4,800 / 40", o: false, v: true },
  { n: "", id: "", bg: "bg-[#b4b4b4]", fg: "text-black", m: "", s: "", o: false, v: false },
];

function LayerTable() {
  const sep = "flex h-full items-center border-r border-[#6a6a6a] pt-[2px] ";
  return (
    <div className="ml-[2px] flex h-[167px] w-[500px] shrink-0 bg-[#2d2d2d]">
      <div className="w-[486px] overflow-hidden">
        <div className="flex h-[20px] bg-linear-to-b from-[#4d4d4d] to-[#3c3c3c] text-white">
          <div className={sep + "w-[62px] pl-[5px]"}>#</div>
          <div className={sep + "w-[36px] pl-[3px]"}>Layer</div>
          <div className={sep + "w-[78px] pl-[3px]"}>Mode</div>
          <div className={sep + "w-[56px] pl-[3px]"}>Spd/Pwr</div>
          <div className={sep + "w-[44px] pl-[3px]"}>Output</div>
          <div className="flex items-center pt-[2px] pl-[3px]">Show</div>
        </div>
        {ROWS.map((r, i) => (
          <div key={i} className={"flex h-6 items-center " + (i === 0 ? "bg-[#1c1c1c]" : "bg-[#2d2d2d]")}>
            <span className="w-[66px] pt-px pl-[3px] whitespace-nowrap">{r.n}</span>
            <div className={"mr-1 flex h-5 w-[30px] shrink-0 items-center justify-center font-['Liberation_Sans'] text-[12.5px] tracking-normal " + r.bg + " " + r.fg}>{r.id}</div>
            <Select v={r.m} className="h-[22px] w-[76px]" on />
            <span className="w-[63px] pt-px pl-[3px] tracking-[-0.42px] whitespace-nowrap">{r.s}</span>
            {r.n && <><Toggle on={r.o} /><div className="w-[22px]" /><Toggle on={r.v} /></>}
          </div>
        ))}
      </div>
      <div className="flex w-[14px] flex-col border-l border-[#1c1c1c] bg-[#3a3a3a]">
        <div className="flex h-[14px] items-center justify-center border border-[#5c5c5c] bg-[#484848]"><svg viewBox="0 0 8 4" className="h-1 w-2"><path d="M0 4H8L4 0Z" fill="#bbb" /></svg></div>
        <div className="h-[75px] border border-[#626262] bg-[#4c4c4c]" />
        <div className="flex-1" />
        <div className="flex h-[14px] items-center justify-center border border-[#5c5c5c] bg-[#484848]"><svg viewBox="0 0 8 4" className="h-1 w-2"><path d="M0 0H8L4 4Z" fill="#bbb" /></svg></div>
      </div>
    </div>
  );
}

function RightDock() {
  const tab = "flex items-center justify-center rounded-b-[2px] border border-t-0 border-[#343434] ";
  return (
    <div className="flex w-[530px] shrink-0 flex-col overflow-hidden">
      <DockTitle t="Cuts / Layers" />
      <div className="mt-px flex h-[167px]">
        <LayerTable />
        <div className="ml-[3px] flex flex-col">
          <Btn className="mt-[15px] h-[17px] w-[26px]"><svg viewBox="0 0 10 6" className="h-[6px] w-[10px]" fill="none" stroke={W} strokeWidth="2.200"><path d="M1 5L5 1.500L9 5" /></svg></Btn>
          <Btn className="mt-[1px] h-[17px] w-[26px]"><svg viewBox="0 0 10 6" className="h-[6px] w-[10px]" fill="none" stroke={W} strokeWidth="2.200"><path d="M1 1L5 4.500L9 1" /></svg></Btn>
          <Btn className="mt-[17px] h-[22px] w-[26px]"><svg viewBox="0 0 24 24" className="h-4 w-4" fill="none"><TrashG c={W} /></svg></Btn>
          <Btn className="mt-[17px] h-[22px] w-[26px]"><svg viewBox="0 0 24 24" className="h-4 w-4" fill="none"><CopyG c={W} /></svg></Btn>
          <Btn className="mt-[2px] h-[22px] w-[26px]"><svg viewBox="0 0 24 24" className="h-4 w-4" fill="none"><Clip c={W} /></svg></Btn>
        </div>
      </div>
      <div className="mt-[7px] ml-[2px] flex h-[108px] shrink-0 justify-end rounded-l-[2px] border border-r-0 border-[#2f2f2f] pt-[3px] pr-[6px]">
        <div className="mr-[6px] flex flex-col items-end gap-1">
          <div className="flex h-[24px] items-center"><span className="mr-[6px] pt-px">Layer Color</span><div className="h-6 w-[71px] border border-white bg-[#ff0000]" /></div>
          <div className="-mt-px flex h-[21px] items-center"><span className="mr-[6px]">Pass Count</span><Spin v="1" align="right" on down={false} className="mr-px h-[21px] w-[70px]" /></div>
          <div className="flex h-[21px] items-center"><span className="mr-[6px] text-[#8c8c8c]">Interval (mm)</span><Spin v="0.100" align="right" className="mr-px h-[21px] w-[70px]" /></div>
        </div>
        <div className="flex flex-col items-end gap-1 pt-[2px]">
          <div className="flex h-[21px] items-center"><span className="mr-[7px]">Speed (mm/m)</span><Spin v="2700.0" align="right" on className="h-[21px] w-[71px]" /></div>
          <div className="flex h-[21px] items-center"><span className="mr-[7px]">Power Max (%)</span><Spin v="65.00" align="right" on className="h-[21px] w-[71px]" /></div>
          <div className="mt-[25px] flex h-[21px] items-center"><span className="mr-[7px]">Frequency (kHz)</span><Spin v="30.0" align="right" on className="h-[21px] w-[71px]" /></div>
        </div>
      </div>
      <div className="ml-[1px] flex h-[28px] shrink-0 items-start gap-px">
        <div className={tab + "h-[28px] w-[91px] pt-[6px]"}>Cuts / Layers</div>
        <div className={tab + "mt-[4px] h-[22px] w-[107px] pt-[2px]"}>Camera Control</div>
        <div className={tab + "mt-[4px] h-[22px] w-[87px] pt-[2px]"}>Variable Text</div>
      </div>
      <HandleH rows={1} className="mt-[4px] ml-[260px] shrink-0" />
      <DockTitle t="Material Library" className="-mt-px" />
      <div className="mt-[3px] ml-px flex h-[22px] shrink-0 items-center">
        <span className="w-[73px] shrink-0 pt-px tracking-[-0.4px] whitespace-nowrap">Select Library</span>
        <Select v="materials" on className="h-[22px] w-[293px]" />
        <Btn className="ml-1 h-[22px] w-[78px] pt-px">Rename</Btn>
        <Btn className="ml-1 h-[22px] w-[78px] pt-px">Unload</Btn>
      </div>
      <div className="mt-[3px] ml-px flex h-[258px] shrink-0">
        <div className="flex w-[264px] flex-col">
          <div className="h-[232px] border border-[#191919] bg-[#2d2d2d] pt-px">
            {["Alum", "Brass"].map((m) => (
              <div key={m} className="flex h-4 items-center pl-[3px]">
                <svg viewBox="0 0 4 8" className="mr-[6px] -mt-px h-2 w-1"><path d="M0 0V8L4 4Z" fill="#b4b4b4" /></svg>
                {m}
              </div>
            ))}
          </div>
          <Btn className="mt-[3px] ml-px h-[22px] pt-px">Manage Library</Btn>
        </div>
        <div className="ml-[6px] flex flex-1 flex-col">
          <div className="h-5 leading-[18px]">Material</div>
          <div className="flex h-[238px] flex-col gap-1 rounded-l-[2px] border border-r-0 border-[#2f2f2f] pt-1 pr-1 pl-[2px] text-[#8c8c8c]">
            <Btn className="h-[22px] pt-px">Assign</Btn>
            <Btn className="h-[22px] pt-px">Link</Btn>
            <Btn className="mt-[17px] h-[38px] pt-px leading-4 text-white">Create new<br />from layer</Btn>
            <Btn className="h-[22px] pt-px">Edit Cut</Btn>
            <Btn className="h-[22px] pt-px">Edit Desc</Btn>
            <Btn className="mt-[17px] h-[22px] pt-px">Duplicate</Btn>
            <Btn className="h-[22px] pt-px">Delete</Btn>
          </div>
        </div>
      </div>
      <div className="ml-px flex shrink-0 items-start gap-px">
        <div className={tab + "mt-px h-[23px] w-[50px] pt-[4px]"}>Laser</div>
        <div className={tab + "h-[26px] w-[104px] pt-[4px]"}>Material Library</div>
      </div>
    </div>
  );
}

const COLORS: [string, string, string][] = [
  ["00", "bg-black", "text-white"], ["01", "bg-[#0000ff]", "text-white"], ["02", "bg-[#ff0000]", "text-white"], ["03", "bg-[#00e000]", "text-black"],
  ["04", "bg-[#d0d000]", "text-black"], ["05", "bg-[#ff8000]", "text-black"], ["06", "bg-[#00e0e0]", "text-black"], ["07", "bg-[#ff00ff]", "text-white"],
  ["08", "bg-[#b4b4b4]", "text-black"], ["09", "bg-[#0000a0]", "text-white"], ["10", "bg-[#a00000]", "text-white"], ["11", "bg-[#00a000]", "text-white"],
  ["12", "bg-[#a0a000]", "text-black"], ["13", "bg-[#c08000]", "text-black"], ["14", "bg-[#00a0ff]", "text-white"], ["15", "bg-[#a000a0]", "text-white"],
  ["16", "bg-[#808080]", "text-white"], ["17", "bg-[#7d87b9]", "text-black"], ["18", "bg-[#bb7784]", "text-black"], ["19", "bg-[#4a6fe3]", "text-white"],
  ["20", "bg-[#d33f6a]", "text-white"], ["21", "bg-[#8cd78c]", "text-black"], ["22", "bg-[#f0b98d]", "text-black"], ["23", "bg-[#f6c4e1]", "text-black"],
  ["24", "bg-[#fa9ed4]", "text-black"], ["25", "bg-[#500a78]", "text-white"], ["26", "bg-[#b45a00]", "text-white"], ["27", "bg-[#004754]", "text-white"],
  ["28", "bg-[#86fa88]", "text-black"], ["29", "bg-[#ffdb66]", "text-black"],
];

const sw = "flex h-6 w-6 shrink-0 items-center justify-center ";

export default function App() {
  return (
    <div className="relative flex h-[897px] w-[1268px] flex-col overflow-hidden bg-[#1f1f1f] font-['Noto_Sans',sans-serif] text-[12px] leading-4 tracking-[-0.33px] text-white">
      <div className="flex h-[26px] shrink-0 items-center pl-[10px]">
        <svg viewBox="0 0 16 16" className="mr-[6px] h-4 w-4 shrink-0">
          <rect width="16" height="16" rx="2" fill="#8b1a22" />
          <rect x="9" y="0" width="7" height="16" rx="2" fill="#c03038" />
          <path d="M1.500 4.500Q7 0 12.500 4" stroke="#fff" strokeWidth="1.300" fill="none" />
          <path d="M2 8Q4 4.500 9 5Q13 6 14.500 9.500L13 10.500L10 9Q7.500 9 8.500 11.500L12.500 15H4Q8 12.500 5.500 9.500Q4 7.500 2 8Z" fill="#fff" />
        </svg>
        <span className="tracking-[-0.24px]">990-painted - JCZFiber - LightBurn Pro 2.0.03</span>
        <svg viewBox="0 0 102 12" className="mr-[14px] mb-px ml-auto h-3 w-[102px]" fill="none" stroke="#fff">
          <path d="M0 6.500H10M91 1L101 11M101 1L91 11" />
          <rect x="45.500" y="1.500" width="9" height="9" rx="1" />
        </svg>
      </div>
      <div className="flex h-6 shrink-0 items-center border-b border-[#737373] pt-[3px] pl-3">
        <span className="w-8"><u>F</u>ile</span>
        <span className="w-[34px]"><u>E</u>dit</span>
        <span className="w-[42px]">Tools</span>
        <span className="w-14"><u>A</u>rrange</span>
        <span className="w-[72px]">Laser Tools</span>
        <span className="w-[58px]"><u>W</u>indow</span>
        <span className="w-[66px]">Language</span>
        <span><u>H</u>elp</span>
      </div>
      <MainToolbar />
      <PropertyBar />
      <div className="flex h-[672px] shrink-0 border-b border-[#737373] pl-[2px]">
        <ToolColumn />
        <Canvas />
        <div className="w-[9px] shrink-0 pt-[329px] pl-[6px]">
          <svg viewBox="0 0 2 18" className="h-[18px] w-[2px]" fill="#777">{[0, 3, 6, 9, 12, 15].map((y) => <rect key={y} y={y} width="2" height="2" />)}</svg>
        </div>
        <RightDock />
      </div>
      <div className="flex h-[38px] shrink-0 items-center border-b border-[#737373] pb-px pl-[7px] font-['Liberation_Sans'] text-[12.5px] tracking-normal">
        <HandleV />
        <div className="ml-[3px] flex items-center">
          {COLORS.map(([n, bg, fg], i) =>
            i === 0 ? (
              <div key={n} className="mr-[6px] rounded-[2px] border-2 border-[#5a5a5a] p-px"><div className={sw + bg + " " + fg}>{n}</div></div>
            ) : (
              <div key={n} className={"mr-[9px] " + sw + bg + " " + fg}>{n}</div>
            )
          )}
          <Sep />
          <div className={sw + "mr-[9px] bg-[#f36926] text-black"}>T1</div>
          <div className={sw + "bg-[#0c96d9] text-white"}>T2</div>
        </div>
      </div>
      <div className="flex h-[23px] items-center pt-[4px] pl-[5px]">
        <div className="flex w-16 items-center gap-[5px]"><SmallToggle kind="green" />Move</div>
        <div className="flex w-[55px] items-center gap-[6px]"><SmallToggle kind="green" />Size</div>
        <div className="flex w-[69px] items-center gap-[6px]"><SmallToggle kind="green" />Rotate</div>
        <div className="flex w-[73px] items-center gap-[6px]"><SmallToggle kind="green" />Shear</div>
        <span className="w-[379px] tracking-[-0.5px]">x: 58.00, y: 109.00 mm</span>
        <span className="w-[453px]">Project loaded in 1 milliseconds</span>
        <div className="flex h-[19px] w-[149px] items-center bg-[#2ecc71] pt-[2px] text-black">Enabled Mode(s): Rotary</div>
      </div>
      <div className="pointer-events-none absolute inset-0 border-2 border-[#ff0000]" />
    </div>
  );
}
